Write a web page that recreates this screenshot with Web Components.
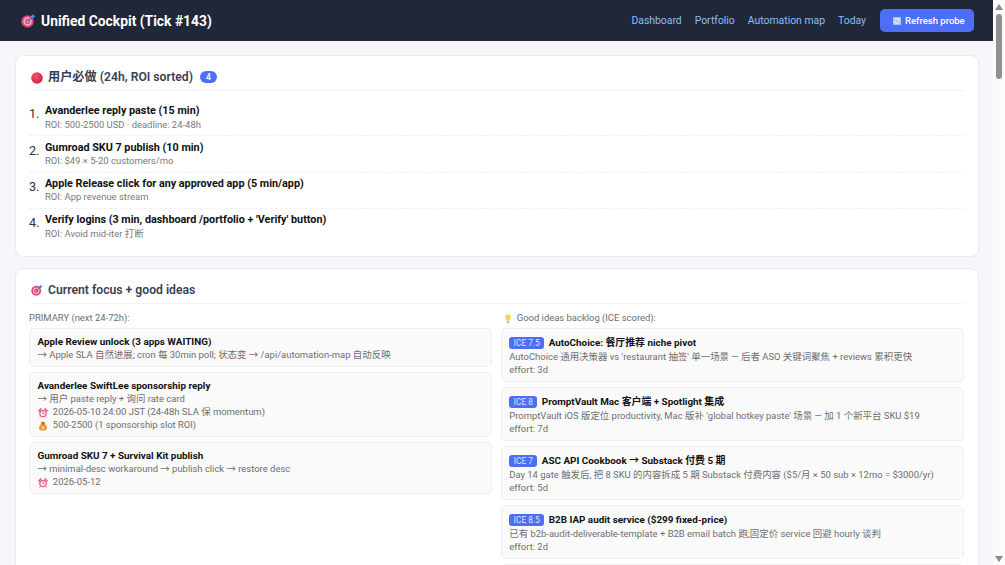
<!DOCTYPE html>
<html lang="zh">
<head>
<meta charset="utf-8">
<title>Unified Cockpit</title>
<style>
body { margin: 0; background: #f5f7fb; color: #222; font-family: Roboto, "Noto Sans CJK SC", sans-serif; font-size: 9.45px; }
</style>
</head>
<body>
<app-shell>
    <top-bar tick="143"></top-bar>
    <main-page></main-page>
</app-shell>

<script>
const ICONS = {
    target: `<svg viewBox="0 0 16 16"><circle cx="7" cy="9" r="6.6" fill="#e5447c"/><circle cx="7" cy="9" r="4.4" fill="#f8b4c8"/><circle cx="7" cy="9" r="2.8" fill="#e5447c"/><circle cx="7" cy="9" r="1.1" fill="#fbd5e0"/><path d="M7 9l5-5" stroke="#3f6fb5" stroke-width="1.2"/><path d="M10.6 3.4l2.6-2.6.5 1.8 1.8.5-2.6 2.6-1.9-.4z" fill="#3d8fe0"/></svg>`,
    red: `<svg viewBox="0 0 12 12"><defs><radialGradient id="r" cx="40%" cy="32%" r="70%"><stop offset="0" stop-color="#f0566c"/><stop offset="1" stop-color="#cf2444"/></radialGradient></defs><circle cx="6" cy="6" r="5.8" fill="url(#r)"/></svg>`,
    clock: `<svg viewBox="0 0 11 11"><path d="M1 3.2L3 1M10 3.2L8 1" stroke="#e8557f" stroke-width="1.7" stroke-linecap="round"/><path d="M2.6 9.8l-.8.9M8.4 9.8l.8.9" stroke="#c9486c" stroke-width="1"/><circle cx="5.5" cy="6" r="4.2" fill="#ec5c86"/><circle cx="5.5" cy="6" r="2.8" fill="#fde8ee"/><path d="M5.5 4.2V6l1.2.7" stroke="#a8324f" stroke-width=".8" fill="none"/></svg>`,
    money: `<svg viewBox="0 0 11 11"><path d="M3.8 3.2L3 .9c1 .5 1.6-.2 2.5.1.9-.3 1.6.4 2.5-.1l-.8 2.3z" fill="#c98532"/><path d="M3.9 3.1C2 4.6 1 6.2 1 7.8 1 9.8 3 10.7 5.5 10.7S10 9.8 10 7.8c0-1.6-1-3.2-2.9-4.7z" fill="#e09a3c"/><path d="M3.9 3.2h3.2" stroke="#8a5a22" stroke-width=".7"/><circle cx="5.5" cy="7.4" r="1.6" fill="#f7d27a"/></svg>`,
    bulb: `<svg viewBox="0 0 8 12"><path d="M4 .4C1.9.4.6 2 .6 3.8c0 1.6 1.3 2.5 1.6 4.3h3.6c.3-1.8 1.6-2.7 1.6-4.3C7.4 2 6.1.4 4 .4z" fill="#fbd35a"/><path d="M2.5 8.6h3v1.2l-.8 1.4H3.3l-.8-1.4z" fill="#a7a7ad"/></svg>`,
    refresh: `<svg viewBox="0 0 8 8"><rect width="8" height="8" rx=".8" fill="#a9c6f5"/><path d="M1.7 3.4A2.4 2.4 0 0 1 6 2.8M6.3 4.6A2.4 2.4 0 0 1 2 5.2" stroke="#fff" stroke-width=".9" fill="none"/><path d="M6.6 1.4v2H4.8zM1.4 6.6v-2h1.8z" fill="#fff"/></svg>`
};

class AppIcon extends HTMLElement {
    constructor() {
        super();
        this.attachShadow({ mode: 'open' });
    }

    connectedCallback() {
        const size = this.getAttribute('size') || 10;
        this.shadowRoot.innerHTML = `
            <style>
                :host { display: inline-block; vertical-align: middle; line-height: 0; }
                svg { display: block; width: ${size}px; height: ${size}px; }
            </style>
            ${ICONS[this.getAttribute('name')]}
        `;
    }
}

class AppShell extends HTMLElement {
    constructor() {
        super();
        this.attachShadow({ mode: 'open' });
        this.shadowRoot.innerHTML = `
            <style>
                :host { display: flex; height: 100vh; overflow: hidden; }
                .view { flex: 1; min-width: 0; overflow: hidden; }
                .rail {
                    display: flex;
                    flex-direction: column;
                    align-items: center;
                    width: 12px;
                    padding: 4px 0 3px;
                    box-sizing: border-box;
                    background: #fbfbfb;
                }
                .rail svg { display: block; width: 8px; height: 6px; fill: #8a8a8a; }
                .thumb { width: 6px; height: 65px; margin-top: 4px; border-radius: 3px; background: #909090; }
                .down { margin-top: auto; }
            </style>
            <div class="view"><slot></slot></div>
            <div class="rail">
                <svg viewBox="0 0 8 6"><path d="M4 0l4 6H0z"/></svg>
                <div class="thumb"></div>
                <svg class="down" viewBox="0 0 8 6"><path d="M4 6L0 0h8z"/></svg>
            </div>
        `;
    }
}

class TopBar extends HTMLElement {
    constructor() {
        super();
        this.attachShadow({ mode: 'open' });
    }

    connectedCallback() {
        const links = ['Dashboard', 'Portfolio', 'Automation map', 'Today'];
        this.shadowRoot.innerHTML = `
            <style>
                :host {
                    display: flex;
                    align-items: center;
                    justify-content: space-between;
                    height: 41px;
                    box-sizing: border-box;
                    padding: 0 19px 0 21px;
                    background: #1f2739;
                    color: #fff;
                }
                h1 { display: flex; align-items: center; gap: 5px; margin: 0; font-size: 13.85px; font-weight: 700; line-height: 18px; }
                nav { display: flex; align-items: center; gap: 13px; }
                a { color: #8fbdf8; text-decoration: none; font-size: 10.4px; }
                button {
                    display: flex;
                    align-items: center;
                    gap: 4px;
                    height: 23px;
                    width: 94px;
                    padding: 0 0 0 13px;
                    margin-left: 1px;
                    border: 0;
                    border-radius: 5px;
                    background: #4f6ef7;
                    color: #fff;
                    font: 500 9.5px Roboto, sans-serif;
                }
            </style>
            <h1><app-icon name="target" size="15"></app-icon>Unified Cockpit (Tick #${this.getAttribute('tick')})</h1>
            <nav>
                ${links.map(link => `<a href="#">${link}</a>`).join('')}
                <button><app-icon name="refresh" size="8"></app-icon>Refresh probe</button>
            </nav>
        `;
    }
}

class PanelCard extends HTMLElement {
    constructor() {
        super();
        this.attachShadow({ mode: 'open' });
        this.shadowRoot.innerHTML = `
            <style>
                :host {
                    display: block;
                    background: #fff;
                    border: 1px solid #e8ebf0;
                    border-radius: 8px;
                    padding: 14px 14px 11px 13px;
                }
                h2 {
                    display: flex;
                    align-items: center;
                    gap: 5px;
                    margin: 0;
                    padding: 0 0 5px 2px;
                    border-bottom: 1px solid #f3f4f6;
                    font-size: 12.2px;
                    font-weight: 600;
                    line-height: 15px;
                    color: #374151;
                }
                .count {
                    position: relative;
                    top: -1px;
                    min-width: 5px;
                    margin-left: 2px;
                    padding: 0 6px;
                    border-radius: 7px;
                    background: #4f6ef7;
                    color: #fff;
                    font-size: 8.5px;
                    line-height: 12px;
                    text-align: center;
                }
            </style>
            <h2><app-icon name="${this.getAttribute('icon')}" size="12"></app-icon><span>${this.getAttribute('heading')}</span>${this.hasAttribute('count') ? `<span class="count">${this.getAttribute('count')}</span>` : ''}</h2>
            <slot></slot>
        `;
    }
}

class TodoItem extends HTMLElement {
    constructor() {
        super();
        this.attachShadow({ mode: 'open' });
        this.shadowRoot.innerHTML = `
            <style>
                :host {
                    display: flex;
                    padding: 4.4px 0;
                    border-bottom: 1px dashed #f0f0f0;
                }
                :host(:last-child) { border-bottom-color: transparent; }
                .n { width: 16px; font-size: 12.6px; line-height: 15px; padding-top: 2px; color: #333; }
                b { display: block; color: #111; font-size: 10.8px; font-weight: 700; line-height: 13.5px; }
                .roi { display: block; color: #7a7a7a; font-size: 9.45px; line-height: 13px; }
            </style>
            <div class="n">${this.getAttribute('n')}.</div>
            <div><b>${this.getAttribute('title')}</b><span class="roi"><slot></slot></span></div>
        `;
    }
}

class FocusCard extends HTMLElement {
    constructor() {
        super();
        this.attachShadow({ mode: 'open' });
        const ice = this.getAttribute('ice');
        const title = this.getAttribute('title');
        this.shadowRoot.innerHTML = `
            <style>
                :host {
                    display: block;
                    margin-bottom: 5px;
                    padding: 6px 8px 5px 7.5px;
                    background: #fafafa;
                    border: 1px solid #eeeeee;
                    border-radius: 5px;
                    color: #6e6e6e;
                    font-size: 9.45px;
                    line-height: 13px;
                }
                .t { color: #111; font-weight: 700; font-size: 9.9px; }
                :host([ice]) .t { line-height: 15px; }
                .ice {
                    display: inline-block;
                    margin-right: 4.5px;
                    padding: 0 4.5px;
                    border-radius: 3px;
                    background: #4f6ef7;
                    color: #dbe4ff;
                    font-size: 8.3px;
                    font-weight: 400;
                    line-height: 12px;
                }
            </style>
            ${title ? `<div class="t">${ice ? `<span class="ice">ICE ${ice}</span>` : ''}${title}</div>` : ''}
            <slot></slot>
        `;
    }
}

class MainPage extends HTMLElement {
    constructor() {
        super();
        this.attachShadow({ mode: 'open' });
        this.shadowRoot.innerHTML = `
            <style>
                :host { display: block; padding: 14px 14.5px 14px 15px; }
                panel-card { margin-bottom: 10.4px; }
                .todos { padding-top: 9px; }
                .cols { display: grid; grid-template-columns: 1fr 1fr; gap: 9px; padding-top: 7.5px; }
                .label { margin-bottom: 4px; color: #6e6e6e; font-size: 9.45px; line-height: 13px; }
                app-icon { margin-right: 3px; }
                .label app-icon { margin: 0 4px 0 2px; }
            </style>
            <panel-card icon="red" heading="用户必做 (24h, ROI sorted)" count="4">
                <div class="todos">
                    <todo-item n="1" title="Avanderlee reply paste (15 min)">ROI: 500-2500 USD · deadline: 24-48h</todo-item>
                    <todo-item n="2" title="Gumroad SKU 7 publish (10 min)">ROI: $49 × 5-20 customers/mo</todo-item>
                    <todo-item n="3" title="Apple Release click for any approved app (5 min/app)">ROI: App revenue stream</todo-item>
                    <todo-item n="4" title="Verify logins (3 min, dashboard /portfolio + 'Verify' button)">ROI: Avoid mid-iter 打断</todo-item>
                </div>
            </panel-card>
            <panel-card icon="target" heading="Current focus + good ideas">
                <div class="cols">
                    <div>
                        <div class="label">PRIMARY (next 24-72h):</div>
                        <focus-card title="Apple Review unlock (3 apps WAITING)">→ Apple SLA 自然进展; cron 每 30min poll; 状态变 → /api/automation-map 自动反映</focus-card>
                        <focus-card title="Avanderlee SwiftLee sponsorship reply">→ 用户 paste reply + 询问 rate card<br><app-icon name="clock"></app-icon> 2026-05-10 24:00 JST (24-48h SLA 保 momentum)<br><app-icon name="money"></app-icon> 500-2500 (1 sponsorship slot ROI)</focus-card>
                        <focus-card title="Gumroad SKU 7 + Survival Kit publish">→ minimal-desc workaround → publish click → restore desc<br><app-icon name="clock"></app-icon> 2026-05-12</focus-card>
                    </div>
                    <div>
                        <div class="label"><app-icon name="bulb" size="10"></app-icon>Good ideas backlog (ICE scored):</div>
                        <focus-card ice="7.5" title="AutoChoice: 餐厅推荐 niche pivot">AutoChoice 通用决策器 vs 'restaurant 抽签' 单一场景 — 后者 ASO 关键词聚焦 + reviews 累积更快<br>effort: 3d</focus-card>
                        <focus-card ice="8" title="PromptVault Mac 客户端 + Spotlight 集成">PromptVault iOS 版定位 productivity, Mac 版补 'global hotkey paste' 场景 — 加 1 个新平台 SKU $19<br>effort: 7d</focus-card>
                        <focus-card ice="7" title="ASC API Cookbook → Substack 付费 5 期">Day 14 gate 触发后, 把 8 SKU 的内容拆成 5 期 Substack 付费内容 ($5/月 × 50 sub × 12mo = $3000/yr)<br>effort: 5d</focus-card>
                        <focus-card ice="8.5" title="B2B IAP audit service ($299 fixed-price)">已有 b2b-audit-deliverable-template + B2B email batch 跑;固定价 service 回避 hourly 谈判<br>effort: 2d</focus-card>
                        <focus-card style="height: 40px"></focus-card>
                    </div>
                </div>
            </panel-card>
        `;
    }
}

customElements.define('app-icon', AppIcon);
customElements.define('app-shell', AppShell);
customElements.define('top-bar', TopBar);
customElements.define('panel-card', PanelCard);
customElements.define('todo-item', TodoItem);
customElements.define('focus-card', FocusCard);
customElements.define('main-page', MainPage);
</script>
</body>
</html>
